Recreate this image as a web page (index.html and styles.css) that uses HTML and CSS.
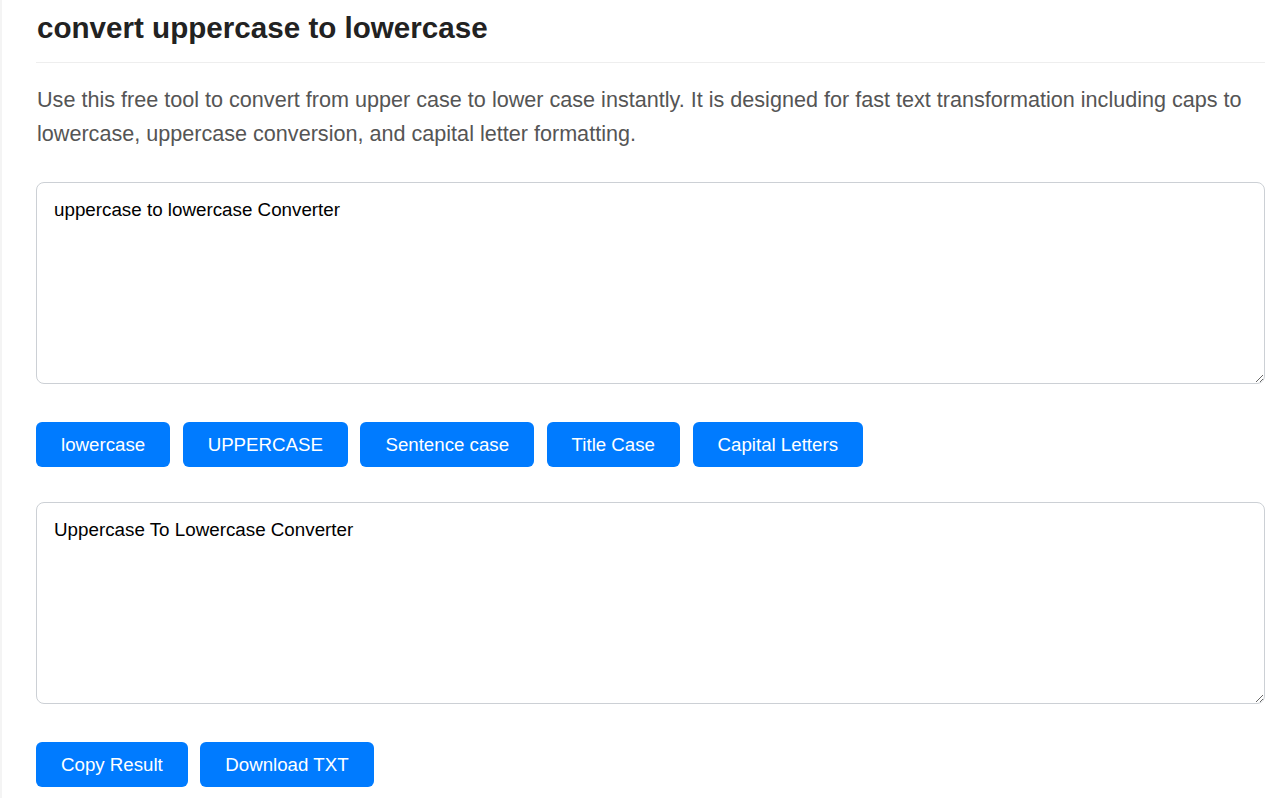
FILE: index.html
```html
<!DOCTYPE html>
<html lang="en">
<head>
<meta charset="utf-8">
<title>convert uppercase to lowercase</title>
<link rel="stylesheet" href="styles.css">
</head>
<body>
<main class="page">
  <h1 class="title">convert uppercase to lowercase</h1>
  <p class="intro">Use this free tool to convert from upper case to lower case instantly. It is designed for fast text transformation including caps to lowercase, uppercase conversion, and capital letter formatting.</p>
  <textarea class="box box-input">uppercase to lowercase Converter</textarea>
  <div class="actions actions-case">
    <button class="btn">lowercase</button>
    <button class="btn">UPPERCASE</button>
    <button class="btn">Sentence case</button>
    <button class="btn">Title Case</button>
    <button class="btn">Capital Letters</button>
  </div>
  <textarea class="box box-output" readonly>Uppercase To Lowercase Converter</textarea>
  <div class="actions actions-out">
    <button class="btn">Copy Result</button>
    <button class="btn">Download TXT</button>
  </div>
</main>
</body>
</html>
```
FILE: styles.css
```css
html, body {
  margin: 0;
  padding: 0;
  background: #f4f4f4;
  font-family: "Liberation Sans", Arial, sans-serif;
}
.page {
  margin-left: 2px;
  background: #fff;
  padding: 11px 13px 40px 34px;
  min-height: 760px;
  display: flex;
  flex-direction: column;
  align-items: stretch;
}
.title {
  margin: 0;
  font-size: 29.6px;
  line-height: 34px;
  font-weight: bold;
  color: #222;
  padding: 0 0 17px 1px;
  border-bottom: 1px solid #eee;
}
.intro {
  margin: 20px 0 31px 1px;
  font-size: 21.6px;
  line-height: 34px;
  color: #555;
}
.box {
  box-sizing: border-box;
  display: block;
  width: 100%;
  height: 202px;
  margin: 0;
  padding: 16px 17px 15px;
  border: 1px solid #ccd0d5;
  border-radius: 8px;
  font-family: "Liberation Sans", Arial, sans-serif;
  font-size: 18.8px;
  line-height: 22px;
  color: #000;
  background: #fff;
  resize: vertical;
  outline: none;
}
.actions {
  display: flex;
  gap: 12.5px;
}
.actions-case {
  margin: 38px 0 35px;
}
.actions-out {
  margin: 38px 0 0;
}
.btn {
  box-sizing: border-box;
  height: 45px;
  padding: 0 25px;
  border: none;
  border-radius: 6px;
  background: #007bff;
  color: #fff;
  font-family: "Liberation Sans", Arial, sans-serif;
  font-size: 18.7px;
  cursor: pointer;
}
```
